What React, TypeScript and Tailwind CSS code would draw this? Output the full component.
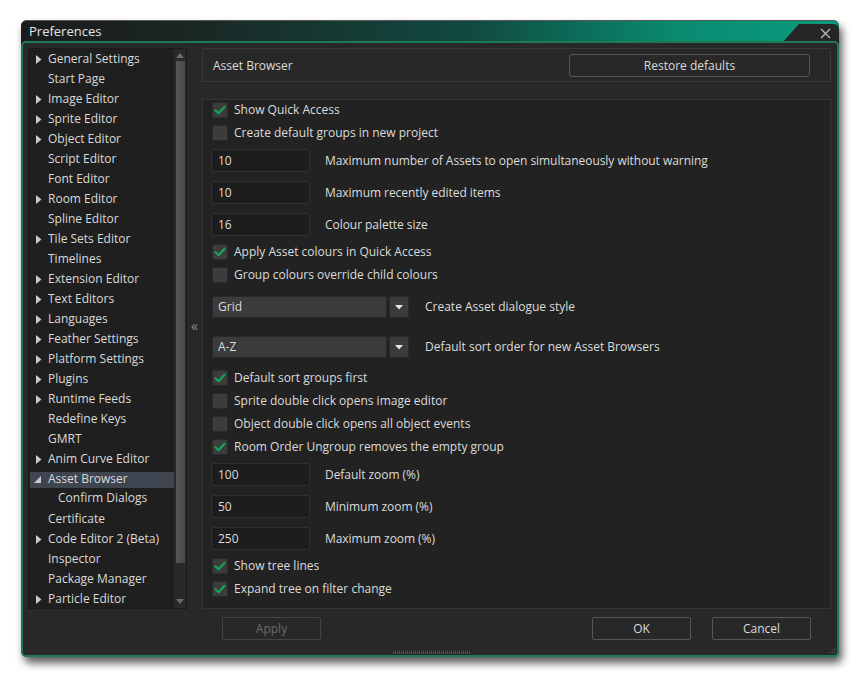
import React from "react";

type TreeItem = { label: string; arrow?: "right" | "down"; child?: boolean; h?: number; sel?: boolean; mt?: number };

const tree: TreeItem[] = [
  { label: "General Settings", arrow: "right" },
  { label: "Start Page" },
  { label: "Image Editor", arrow: "right" },
  { label: "Sprite Editor", arrow: "right" },
  { label: "Object Editor", arrow: "right" },
  { label: "Script Editor" },
  { label: "Font Editor" },
  { label: "Room Editor", arrow: "right" },
  { label: "Spline Editor" },
  { label: "Tile Sets Editor", arrow: "right" },
  { label: "Timelines" },
  { label: "Extension Editor", arrow: "right" },
  { label: "Text Editors", arrow: "right" },
  { label: "Languages", arrow: "right" },
  { label: "Feather Settings", arrow: "right" },
  { label: "Platform Settings", arrow: "right" },
  { label: "Plugins", arrow: "right" },
  { label: "Runtime Feeds", arrow: "right" },
  { label: "Redefine Keys" },
  { label: "GMRT" },
  { label: "Anim Curve Editor", arrow: "right" },
  { label: "Asset Browser", arrow: "down", sel: true },
  { label: "Confirm Dialogs", child: true, h: 18 },
  { label: "Certificate", mt: 2 },
  { label: "Code Editor 2 (Beta)", arrow: "right" },
  { label: "Inspector" },
  { label: "Package Manager" },
  { label: "Particle Editor", arrow: "right" },
];

function Check({ on }: { on: boolean }) {
  return (
    <div className="w-[16px] h-[16px] rounded-[2px] bg-[#3c3c3c] border border-[#2c2c2c] flex items-center justify-center shrink-0">
      {on && (
        <svg width="12" height="10" viewBox="0 0 12 10">
          <path d="M1.5 5.2 L4.6 8.2 L10.5 1.8" fill="none" stroke="#14a45c" strokeWidth="2.2" strokeLinecap="round" strokeLinejoin="round" />
        </svg>
      )}
    </div>
  );
}

function CheckRow({ on, label, mt }: { on: boolean; label: string; mt: string }) {
  return (
    <div className={`flex items-center h-[20px] pl-[9px] gap-[6px] ${mt}`}>
      <Check on={on} />
      <span className="text-[#dcdcdc]">{label}</span>
    </div>
  );
}

function InputRow({ value, label, mt }: { value: string; label: string; mt: string }) {
  return (
    <div className={`flex items-center h-[23px] pl-[8px] ${mt}`}>
      <div className="w-[99px] h-[23px] bg-[#1d1d1d] border border-[#303030] rounded-[2px] flex items-center pl-[6px] text-[#dcdcdc]">
        {value}
      </div>
      <span className="ml-[15px] text-[#dcdcdc] tracking-[-0.05px]">{label}</span>
    </div>
  );
}

function DropRow({ value, label, mt }: { value: string; label: string; mt: string }) {
  return (
    <div className={`flex items-center h-[22px] pl-[9px] ${mt}`}>
      <div className="w-[175px] h-[22px] bg-[#3b3b3b] border border-[#2a2a2a] rounded-[2px] flex items-center pl-[5px] text-[#dcdcdc]">
        {value}
      </div>
      <div className="ml-[2px] w-[20px] h-[22px] bg-[#3b3b3b] border border-[#2a2a2a] rounded-[2px] flex items-center justify-center">
        <svg width="8" height="5" viewBox="0 0 8 5">
          <path d="M0 0 L8 0 L4 4.5 Z" fill="#e6e6e6" />
        </svg>
      </div>
      <span className="ml-[16px] text-[#dcdcdc]">{label}</span>
    </div>
  );
}

export default function App() {
  return (
    <div
      className="w-[860px] h-[683px] bg-white pl-[21px] pt-[20px] text-[12px]"
      style={{ fontFamily: '"Open Sans", "Noto Sans", sans-serif' }}
    >
      <div className="relative w-[818px] h-[637px] rounded-[6px] shadow-[3px_6px_8px_rgba(0,0,0,0.65)] bg-[#282828] flex flex-col">
        {/* Title bar */}
        <div className="relative h-[24px] rounded-t-[6px] border-t border-[#5a5a5a] bg-[linear-gradient(90deg,#1a1c1c_0%,#1b2624_20%,#104a40_55%,#0a8a70_80%,#0a9c7e_100%)] flex items-start">
          <span className="ml-[8px] mt-[2px] text-[13px] text-[#e4e4e4] leading-[16px]">Preferences</span>
          <svg className="absolute right-0 top-[3px]" width="58" height="20" viewBox="0 0 58 20">
            <path d="M0 20 L18 0 L52 0 Q58 0 58 6 L58 20 Z" fill="#262626" />
            <path d="M40 5 L49 14 M49 5 L40 14" stroke="#b8b8b8" strokeWidth="1.4" />
          </svg>
        </div>
        {/* Body */}
        <div className="relative -mt-[3px] flex-1 rounded-[5px] border-2 border-[#1c7a56] bg-[#282828] flex flex-col">
          <div className="flex pt-[5px] pl-[5px] pr-[6px]">
            {/* Tree panel */}
            <div className="w-[159px] h-[561px] bg-[#1f1f1f] border border-[#1a1a1a] flex">
              <div className="flex-1 pt-0 pl-[1px]">
                {tree.map((t, i) => (
                  <div
                    key={i}
                    className={`relative flex items-center ${t.h === 18 ? "h-[18px]" : "h-[20px]"} ${t.mt ? "mt-[2px]" : ""}`}
                  >
                    {t.sel && <div className="absolute left-0 right-0 top-[3px] h-[16px] bg-[#3e4551]" />}
                    {t.arrow === "right" && (
                      <svg className="absolute left-[6px] top-[6px]" width="6" height="9" viewBox="0 0 6 9">
                        <path d="M0 0 L5.5 4.5 L0 9 Z" fill="#c9c9c9" />
                      </svg>
                    )}
                    {t.arrow === "down" && (
                      <svg className="absolute left-[4px] top-[7px]" width="7" height="7" viewBox="0 0 7 7">
                        <path d="M7 0 L7 7 L0 7 Z" fill="#c9c9c9" />
                      </svg>
                    )}
                    <span className={`relative text-[#dadada] whitespace-nowrap ${t.child ? "ml-[28px]" : "ml-[18px]"}`}>{t.label}</span>
                  </div>
                ))}
              </div>
              {/* Scrollbar */}
              <div className="w-[12px] h-full bg-[#292929] flex flex-col items-center">
                <svg className="mt-[4px]" width="8" height="5" viewBox="0 0 8 5">
                  <path d="M0 5 L4 0 L8 5 Z" fill="#6a6a6a" />
                </svg>
                <div className="mt-[3px] w-[9px] h-[502px] bg-[linear-gradient(90deg,#555_0%,#4a4a4a_100%)]" />
                <div className="flex-1" />
                <svg className="mb-[4px]" width="8" height="5" viewBox="0 0 8 5">
                  <path d="M0 0 L8 0 L4 5 Z" fill="#6a6a6a" />
                </svg>
              </div>
            </div>
            {/* Splitter */}
            <div className="w-[15px] flex items-center justify-center">
              <span className="text-[#8a8a8a] text-[14px] leading-none -mt-[6px]">«</span>
            </div>
            {/* Right column */}
            <div className="w-[629px] flex flex-col">
              <div className="h-[34px] border border-[#393939] bg-[#282828] flex items-center justify-between pl-[10px] pr-[20px] pt-[1px] rounded-[1px]">
                <span className="text-[#dcdcdc]">Asset Browser</span>
                <div className="w-[241px] h-[23px] border border-[#565656] rounded-[3px] flex items-center justify-center text-[#dcdcdc]">
                  Restore defaults
                </div>
              </div>
              <div className="mt-[17px] h-[510px] bg-[#222222] border border-[#353535] flex flex-col">
                <CheckRow on label="Show Quick Access" mt="mt-0" />
                <CheckRow on={false} label="Create default groups in new project" mt="mt-[3px]" />
                <InputRow value="10" label="Maximum number of Assets to open simultaneously without warning" mt="mt-[6px]" />
                <InputRow value="10" label="Maximum recently edited items" mt="mt-[9px]" />
                <InputRow value="16" label="Colour palette size" mt="mt-[9px]" />
                <CheckRow on label="Apply Asset colours in Quick Access" mt="mt-[6px]" />
                <CheckRow on={false} label="Group colours override child colours" mt="mt-[3px]" />
                <DropRow value="Grid" label="Create Asset dialogue style" mt="mt-[11px]" />
                <DropRow value="A-Z" label="Default sort order for new Asset Browsers" mt="mt-[18px]" />
                <CheckRow on label="Default sort groups first" mt="mt-[10px]" />
                <CheckRow on={false} label="Sprite double click opens image editor" mt="mt-[3px]" />
                <CheckRow on={false} label="Object double click opens all object events" mt="mt-[3px]" />
                <CheckRow on label="Room Order Ungroup removes the empty group" mt="mt-[3px]" />
                <InputRow value="100" label="Default zoom (%)" mt="mt-[6px]" />
                <InputRow value="50" label="Minimum zoom (%)" mt="mt-[9px]" />
                <InputRow value="250" label="Maximum zoom (%)" mt="mt-[9px]" />
                <CheckRow on label="Show tree lines" mt="mt-[6px]" />
                <CheckRow on label="Expand tree on filter change" mt="mt-[3px]" />
              </div>
            </div>
          </div>
          {/* Buttons */}
          <div className="flex items-center mt-[8px] pl-[199px] pr-[26px]">
            <div className="w-[99px] h-[23px] border border-[#444] rounded-[2px] flex items-center justify-center text-[#6a6a6a]">Apply</div>
            <div className="flex-1" />
            <div className="w-[99px] h-[23px] border border-[#565656] rounded-[2px] flex items-center justify-center text-[#dcdcdc]">OK</div>
            <div className="ml-[21px] w-[99px] h-[23px] border border-[#565656] rounded-[2px] flex items-center justify-center text-[#dcdcdc]">Cancel</div>
          </div>
          <div className="absolute bottom-[1px] left-[370px] w-[78px] h-[3px] bg-[repeating-linear-gradient(90deg,#555_0px,#555_1px,transparent_1px,transparent_2px)]" />
          <svg className="absolute right-[1px] bottom-[1px]" width="7" height="7" viewBox="0 0 7 7">
            <path d="M6 1 L6 2 M4 3 L4 4 M6 3 L6 4 M2 5 L2 6 M4 5 L4 6 M6 5 L6 6" stroke="#5a5a5a" strokeWidth="1" />
          </svg>
        </div>
      </div>
    </div>
  );
}
